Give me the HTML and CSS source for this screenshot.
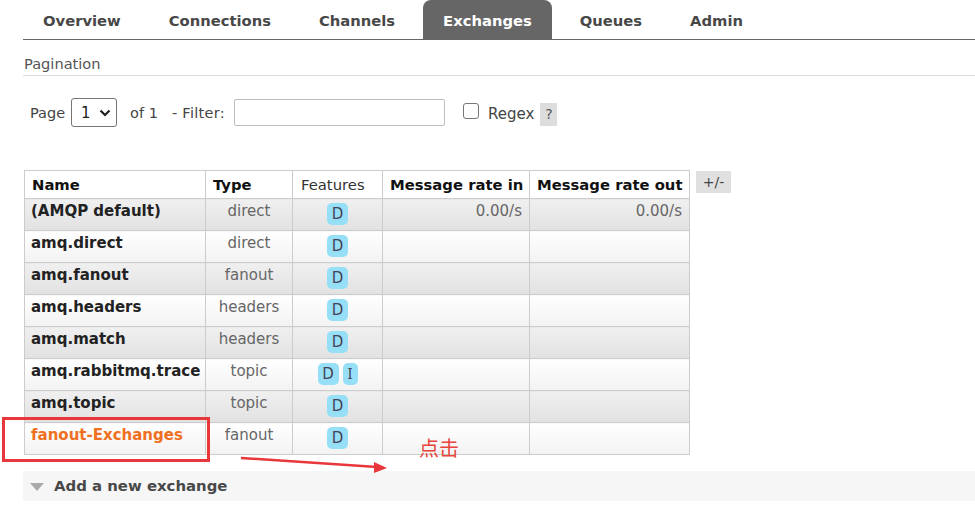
FILE: index.html
```html
<!DOCTYPE html>
<html>
<head>
<meta charset="utf-8">
<title>Exchanges</title>
<link rel="stylesheet" href="styles.css">
</head>
<body>
<div class="page">
  <nav class="tabs">
    <a class="tab">Overview</a>
    <a class="tab">Connections</a>
    <a class="tab">Channels</a>
    <a class="tab active">Exchanges</a>
    <a class="tab">Queues</a>
    <a class="tab">Admin</a>
  </nav>
  <div class="content">
    <h3 class="section-title">Pagination</h3>
    <div class="filter-row">
      <span class="lbl">Page</span>
      <div class="select"><span>1</span><svg class="chev" width="12" height="8" viewBox="0 0 12 8"><path d="M1.5 1.5 L6 6 L10.5 1.5" fill="none" stroke="#222" stroke-width="2.2"/></svg></div>
      <span class="lbl of">of 1</span>
      <span class="lbl filter">- Filter:</span>
      <div class="input"></div>
      <span class="checkbox"></span>
      <span class="lbl regex">Regex</span>
      <span class="help">?</span>
    </div>
    <div class="table-wrap">
      <table class="list">
        <colgroup><col class="c-name"><col class="c-type"><col class="c-feat"><col class="c-in"><col class="c-out"></colgroup>
        <thead>
          <tr><th class="l">Name</th><th class="l">Type</th><th class="n">Features</th><th>Message rate in</th><th>Message rate out</th></tr>
        </thead>
        <tbody>
          <tr class="alt1"><td class="name">(AMQP default)</td><td class="type">direct</td><td class="feat"><span class="badge">D</span></td><td class="rate">0.00/s</td><td class="rate">0.00/s</td></tr>
          <tr class="alt2"><td class="name">amq.direct</td><td class="type">direct</td><td class="feat"><span class="badge">D</span></td><td></td><td></td></tr>
          <tr class="alt1"><td class="name">amq.fanout</td><td class="type">fanout</td><td class="feat"><span class="badge">D</span></td><td></td><td></td></tr>
          <tr class="alt2"><td class="name">amq.headers</td><td class="type">headers</td><td class="feat"><span class="badge">D</span></td><td></td><td></td></tr>
          <tr class="alt1"><td class="name">amq.match</td><td class="type">headers</td><td class="feat"><span class="badge">D</span></td><td></td><td></td></tr>
          <tr class="alt2"><td class="name">amq.rabbitmq.trace</td><td class="type">topic</td><td class="feat"><span class="badge">D</span><span class="badge bi">I</span></td><td></td><td></td></tr>
          <tr class="alt1"><td class="name">amq.topic</td><td class="type">topic</td><td class="feat"><span class="badge">D</span></td><td></td><td></td></tr>
          <tr class="alt2"><td class="name link">fanout-Exchanges</td><td class="type">fanout</td><td class="feat"><span class="badge">D</span></td><td></td><td></td></tr>
        </tbody>
      </table>
      <span class="toggle">+/-</span>
    </div>
    <div class="add-section"><span class="tri"></span><span>Add a new exchange</span></div>
  </div>

  <div class="mark-box"></div>
  <svg class="mark-arrow" width="975" height="508" viewBox="0 0 975 508">
    <path d="M241 458 L377 467" stroke="#e8363a" stroke-width="2.5" fill="none"/>
    <polygon points="374,462 387,468 374,473" fill="#e8363a"/>
  </svg>
  <span class="mark-text">点击</span>
</div>
</body>
</html>
```

FILE: styles.css
```css
* { box-sizing: border-box; }

body {
  margin: 0;
  font-family: "DejaVu Sans", Verdana, sans-serif;
  color: #484848;
  background: #fff;
}

.page {
  position: relative;
  width: 975px;
  height: 508px;
  overflow: hidden;
}

/* tabs */
.tabs {
  display: flex;
  margin-left: 23px;
  height: 40px;
  border-bottom: 1px solid #666;
}
.tab {
  height: 39px;
  padding: 2px 20px 0;
  margin-right: 8px;
  font-weight: bold;
  font-size: 14.75px;
  line-height: 37px;
  color: #484848;
  border-radius: 8px 8px 0 0;
}
.tab.active {
  background: #666;
  color: #fff;
}

.content {
  padding-left: 23px;
}

.section-title {
  margin: 0;
  padding: 15px 0 3px 1px;
  font-size: 14.6px;
  font-weight: normal;
  line-height: 17px;
  color: #555;
  border-bottom: 1px solid #ddd;
}

/* filter row */
.filter-row {
  display: flex;
  align-items: center;
  height: 29px;
  margin-top: 22px;
  padding-left: 7px;
  font-size: 14.5px;
  color: #444;
}
.lbl { line-height: 18px; }
.select {
  display: flex;
  align-items: center;
  width: 46px;
  height: 29px;
  margin-left: 6px;
  padding-left: 9px;
  border: 1px solid #767676;
  border-radius: 3px;
  font-size: 15px;
  color: #222;
}
.chev { margin-left: 8px; }
.of { margin-left: 13px; }
.filter { margin-left: 14px; letter-spacing: 0.3px; }
.input {
  width: 211px;
  height: 27px;
  margin-left: 9px;
  border: 1px solid #bdbdbd;
  border-radius: 2px;
}
.checkbox {
  width: 16px;
  height: 16px;
  margin-left: 18px;
  margin-top: -3px;
  border: 1px solid #767676;
  border-radius: 3px;
}
.regex { margin-left: 9px; margin-top: 2px; font-size: 15px; }
.help {
  width: 17px;
  height: 23px;
  margin-left: 6px;
  margin-top: 4px;
  background: #ddd;
  text-align: center;
  line-height: 23px;
  color: #555;
  font-size: 14px;
}

/* table */
.table-wrap {
  display: flex;
  align-items: flex-start;
  margin-top: 43px;
  margin-left: 1px;
}
.list {
  border-collapse: collapse;
  table-layout: fixed;
  width: 665px;
}
.c-name { width: 181px; }
.c-type { width: 87px; }
.c-feat { width: 90px; }
.c-in { width: 147px; }
.c-out { width: 160px; }

.list th,
.list td {
  border: 1px solid #ccc;
  padding: 0 7px;
  white-space: nowrap;
}
.list th {
  height: 28px;
  font-size: 14.8px;
  font-weight: bold;
  color: #111;
  text-align: left;
  background: #fff;
  vertical-align: middle;
}
.list th.n {
  font-weight: normal;
  color: #333;
  text-align: left;
  padding: 0 0 0 8px;
}
.list td {
  height: 32px;
  vertical-align: top;
  padding-top: 3px;
  line-height: 18px;
  font-size: 15px;
}
.alt1 td { background: linear-gradient(#f0f0f0, #e1e1e1); }
.alt2 td { background: linear-gradient(#ffffff, #f2f2f2); }

.name {
  font-weight: bold;
  color: #222;
}
.list td.name { padding-left: 6px; }
.name.link { color: #f07021; }
.type {
  text-align: center;
  color: #666;
}
.feat {
  text-align: center;
  padding: 3px 0 0 !important;
}
.rate {
  text-align: right;
  color: #666;
}
.badge {
  display: inline-block;
  vertical-align: top;
  min-width: 21px;
  height: 22px;
  margin-top: 1px;
  padding: 0 4px;
  border-radius: 5px;
  background: #97dff7;
  color: #445;
  line-height: 22px;
  font-size: 15px;
  text-align: center;
}
.badge.bi {
  min-width: 15px;
  margin-left: 4px;
  font-family: "DejaVu Serif", serif;
  font-size: 14px;
}
.toggle {
  width: 35px;
  height: 22px;
  margin-left: 6px;
  margin-top: 1px;
  background: #e0e0e0;
  text-align: center;
  line-height: 22px;
  font-size: 14px;
  color: #444;
}

/* add section */
.add-section {
  display: flex;
  align-items: center;
  height: 30px;
  margin-top: 16px;
  padding-left: 7px;
  background: #f6f6f6;
  font-size: 14.9px;
  font-weight: bold;
  color: #484848;
}
.tri {
  width: 0;
  height: 0;
  margin-right: 10px;
  margin-top: 2px;
  border-left: 7.5px solid transparent;
  border-right: 7.5px solid transparent;
  border-top: 8px solid #aaa;
}

/* annotations */
.mark-box {
  position: absolute;
  left: 2px;
  top: 417px;
  width: 208px;
  height: 45px;
  border: 3px solid #e8363a;
}
.mark-arrow {
  position: absolute;
  left: 0;
  top: 0;
  pointer-events: none;
}
.mark-text {
  position: absolute;
  left: 419px;
  top: 435px;
  font-family: "Noto Sans CJK SC", sans-serif;
  font-size: 20px;
  line-height: 25px;
  color: #e8453c;
}
```
